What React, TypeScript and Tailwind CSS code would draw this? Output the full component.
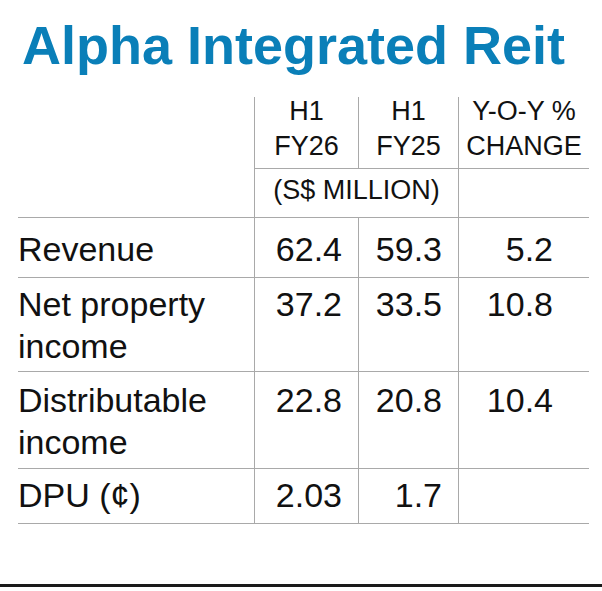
const rows = [
  { label: ["Revenue"], h: "h-[60px]", pt: "pt-[10px]", a: "62.4", b: "59.3", c: "5.2" },
  { label: ["Net property", "income"], h: "h-[94px]", pt: "pt-[5px]", a: "37.2", b: "33.5", c: "10.8" },
  { label: ["Distributable", "income"], h: "h-[97px]", pt: "pt-[7px]", a: "22.8", b: "20.8", c: "10.4" },
  { label: ["DPU (¢)"], h: "h-[55px]", pt: "pt-[5px]", a: "2.03", b: "1.7", c: "" },
];

const cols = "grid grid-cols-[236px_104px_100px_131px]";

export default function App() {
  return (
    <div
      className="w-[602px] h-[591px] bg-white text-[#111] overflow-hidden"
      style={{ fontFamily: '"Liberation Sans", Arial, sans-serif' }}
    >
      <h1 className="pt-[18px] pl-[22px] text-[54px] leading-[54px] font-bold text-[#0a7fb8] whitespace-nowrap">
        Alpha Integrated Reit
      </h1>

      <div className="mt-[25px] mx-[18px] w-[571px]">
        {/* header */}
        <div className={`${cols} h-[72px] text-[27px] leading-[35px]`}>
          <div />
          <div className="border-l border-b border-[#a9a9a9] text-center">
            <div className="-mt-[3px]">H1<br />FY26</div>
          </div>
          <div className="border-l border-b border-[#a9a9a9] text-center">
            <div className="-mt-[3px]">H1<br />FY25</div>
          </div>
          <div className="border-l border-b border-[#a9a9a9] text-center whitespace-nowrap">
            <div className="-mt-[3px]">Y-O-Y %<br />CHANGE</div>
          </div>
        </div>

        <div className={`${cols} h-[49px] text-[27px] leading-[35px] border-b border-[#a9a9a9]`}>
          <div />
          <div className="col-span-2 border-l border-[#a9a9a9] text-center pt-[4px] whitespace-nowrap">
            (S$ MILLION)
          </div>
          <div className="border-l border-[#a9a9a9]" />
        </div>

        {rows.map((r) => (
          <div
            key={r.label[0]}
            className={`${cols} ${r.h} text-[34px] leading-[42px] border-b border-[#a9a9a9]`}
          >
            <div className={`${r.pt} whitespace-nowrap`}>
              {r.label.map((l) => (
                <div key={l}>{l}</div>
              ))}
            </div>
            <div className={`${r.pt} border-l border-[#a9a9a9] text-right pr-[16px]`}>{r.a}</div>
            <div className={`${r.pt} border-l border-[#a9a9a9] text-right pr-[16px]`}>{r.b}</div>
            <div className={`${r.pt} border-l border-[#a9a9a9] text-right pr-[36px]`}>{r.c}</div>
          </div>
        ))}
      </div>

      <div className="mt-[60px] h-[3px] bg-[#1a1a1a]" />
    </div>
  );
}
